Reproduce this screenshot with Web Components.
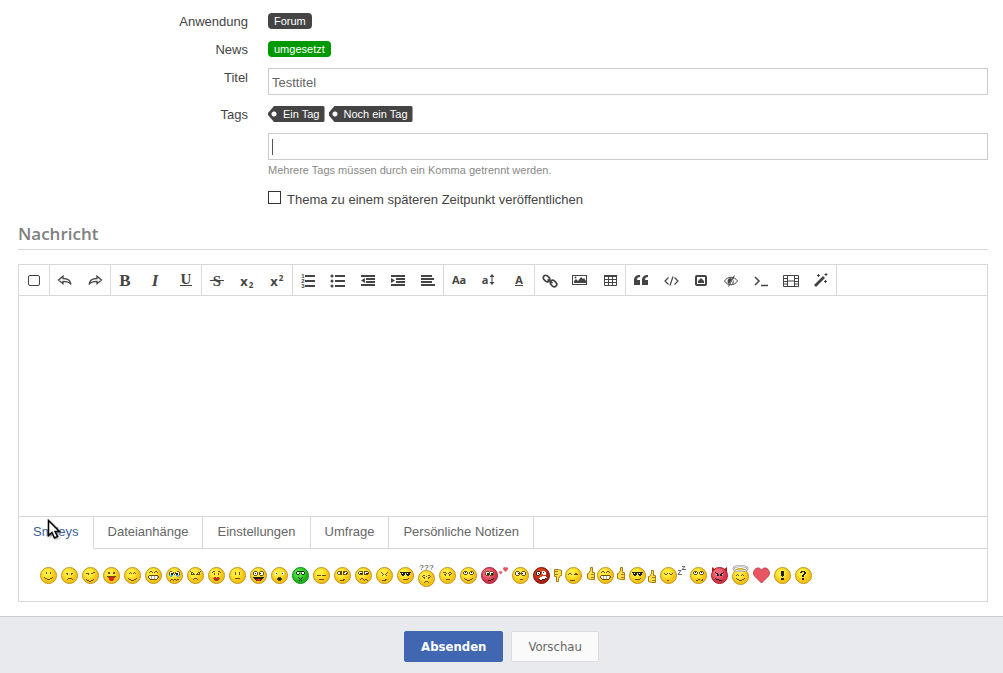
<!DOCTYPE html>
<html lang="de">
<head>
<meta charset="utf-8">
<title>Neues Thema</title>
<style>
	html {
		height: 100%;
	}

	body {
		margin: 0;
		min-height: 100%;
		display: flex;
		flex-direction: column;
		background: #fff;
		color: #444;
		font: 13px/18px "Liberation Sans", Arial, sans-serif;
	}
</style>
</head>
<body>
<thread-form></thread-form>

<script>
	function define(name, html, setup) {
		const template = document.createElement('template');
		template.innerHTML = html;

		window.customElements.define(
			name,
			class extends HTMLElement {
				constructor() {
					super();
					this.attachShadow({ mode: 'open' });
					this.shadowRoot.appendChild(template.content.cloneNode(true));
				}

				connectedCallback() {
					if (setup) setup(this, this.shadowRoot);
				}
			}
		);
	}

	// label on the left, fields on the right
	define('form-row', `
		<style>
			:host {
				display: flex;
				gap: 20px;
			}

			.label {
				flex: 0 0 230px;
				box-sizing: border-box;
				height: 18px;
				padding-top: 1px;
				text-align: right;
			}

			.field {
				flex: 1;
				min-width: 0;
				display: flex;
				flex-direction: column;
				gap: 10px;
			}
		</style>
		<div class="label"><slot name="label"></slot></div>
		<div class="field"><slot></slot></div>
	`);

	define('label-badge', `
		<style>
			:host {
				display: block;
				box-sizing: border-box;
				height: 16px;
				padding: 0 6px;
				border-radius: 4px;
				background: #444;
				color: #fff;
				font-size: 11px;
				line-height: 16px;
				white-space: nowrap;
			}

			:host([color="green"]) {
				background: #090;
			}

			:host([tag]) {
				padding: 0 5px 0 15px;
				border-radius: 2px;
				background: radial-gradient(circle at 6px 8px, #fff 2px, #444 3px);
				clip-path: polygon(0 7px, 6px 0, 100% 0, 100% 100%, 6px 100%, 0 9px);
			}
		</style>
		<slot></slot>
	`);

	const line = (x, y, w) => `<rect x="${x}" y="${y}" width="${w}" height="2"/>`;

	const icons = {
		source: '<rect x="2.5" y="3.5" width="11" height="10" rx="1.5" class="o"/>',
		undo: '<path class="o" stroke-width="1.300" d="M1.500 8 6 4.200v2.300c4.500 0 7.500 1.500 8 6-1.500-2.500-4-3.200-8-3.200v2.400z"/>',
		redo: '<path class="o" stroke-width="1.300" d="M14.500 8 10 4.200v2.300c-4.500 0-7.500 1.500-8 6 1.500-2.500 4-3.200 8-3.200v2.400z"/>',
		bold: '<text x="7" y="14" class="serif">B</text>',
		italic: '<text x="7" y="14" class="serif" font-style="italic">I</text>',
		underline: '<text x="8" y="12" class="serif small">U</text><path d="M2 13h12v1H2z"/>',
		strike: '<text x="8" y="14" class="serif small">S</text><path d="M1 8h14v1H1z"/>',
		sub: '<text x="5" y="14" class="sans big">x</text><text x="12" y="16" class="sans tiny">2</text>',
		sup: '<text x="5" y="14" class="sans big">x</text><text x="12" y="9" class="sans tiny">2</text>',
		ol: '<text x="3" y="6" class="num">1</text><text x="3" y="11" class="num">2</text><text x="3" y="16" class="num">3</text>' +
			line(5, 3, 10) + line(5, 8, 10) + line(5, 13, 10),
		ul: '<circle cx="2" cy="4" r="1.500"/><circle cx="2" cy="9" r="1.500"/><circle cx="2" cy="14" r="1.500"/>' +
			line(5, 3, 10) + line(5, 8, 10) + line(5, 13, 10),
		outdent: line(1, 3, 14) + line(6, 6, 9) + line(6, 9, 9) + line(1, 12, 14) + '<path d="M5 6v5L1 8.500z"/>',
		indent: line(1, 3, 14) + line(6, 6, 9) + line(6, 9, 9) + line(1, 12, 14) + '<path d="M1 6v5l4-2.500z"/>',
		align: line(1, 3, 11) + line(1, 6, 13) + line(1, 9, 11) + line(1, 12, 14),
		font: '<text x="8" y="12" class="sans">Aa</text>',
		size: '<text x="4" y="12" class="sans">a</text><path d="M11 2l2.500 3h-2v5h2L11 13l-2.500-3h2V5h-2z"/>',
		color: '<text x="8" y="12" class="sans">A</text><path d="M4 13h8v1H4z"/>',
		link: '<g fill="none" stroke="#444" stroke-width="1.700"><rect x="1" y="4" width="7" height="5" rx="2.500" transform="rotate(42 4.500 6.500)"/><rect x="8" y="9" width="7" height="5" rx="2.500" transform="rotate(42 11.500 11.500)"/><path d="m5.500 7.500 5 3.500"/></g>',
		image: '<rect x=".5" y="3.500" width="14" height="9" class="o"/><path d="M2 11V9l2-2 2 2 3-4 2 2 1-1 2 3v2z"/><circle cx="3.500" cy="5.500" r="1"/>',
		table: '<path class="o" d="M2.500 4v9.500h12V4zM6.500 4v9.500M10.500 4v9.500M2.500 7.500h12M2.500 10.500h12"/><path d="M2 3h13v2H2z"/>',
		quote: '<path d="M7 3v2C5 5 4 6 4 8h3v5H1V8c0-3 2-5 6-5zM15 3v2c-2 0-3 1-3 3h3v5H9V8c0-3 2-5 6-5z"/>',
		code: '<path class="o" stroke-width="1.200" d="M5.500 5.500 2 9l3.500 3.500M11.500 5.500 15 9l-3.500 3.500M10 4.500l-3 9"/>',
		spoiler: '<rect x="3" y="4" width="10" height="9" rx="1" fill="none" stroke="#444" stroke-width="2"/><path d="M5 11V9l3-3 3 3v2z"/>',
		eye: '<path class="o" d="M1.500 9c3-5 10-5 13 0-3 5-10 5-13 0z"/><path d="M7 6c-3 1-3 5-1 6l5-8-2 9c2-1 2-4 1-6z"/><path class="o" d="m11.500 3.500-6 11"/>',
		terminal: '<path class="o" stroke-width="1.500" d="m2 5 4 4-4 4M8 13.500h7"/>',
		film: '<path class="o" d="M.5 3.500h15v11H.5zM4.500 3.500v11M11.500 3.500v11M4.500 9h7M.5 6.500h4M.5 9.500h4M.5 12h4M11.500 6.500h4M11.500 9.500h4M11.500 12h4"/>',
		magic: '<path d="m1 13 9-9 2 2-9 9z"/><path class="o" d="M5.500 2v3M4 3.500h3M13 1v3M11.500 2.500h3M12.500 8v3M11 9.500h3"/>'
	};

	define('tool-button', `
		<style>
			:host {
				display: block;
			}

			button {
				display: flex;
				align-items: center;
				justify-content: center;
				width: 30px;
				height: 30px;
				margin: 0;
				padding: 0;
				border: 0;
				background: none;
			}

			svg {
				width: 16px;
				height: 16px;
				fill: #444;
				overflow: visible;
			}

			.o {
				fill: none;
				stroke: #444;
			}

			text {
				text-anchor: middle;
				font-weight: bold;
			}

			.serif {
				font-family: "Liberation Serif", serif;
				font-size: 17px;
			}

			.serif.small {
				font-size: 15px;
			}

			.sans {
				font-family: "Open Sans", sans-serif;
				font-size: 11px;
			}

			.sans.big {
				font-size: 13px;
			}

			.sans.tiny {
				font-size: 8px;
			}

			.num {
				font-family: "Liberation Sans", sans-serif;
				font-size: 6px;
			}
		</style>
		<button type="button"><svg viewBox="0 0 16 16" aria-hidden="true"></svg></button>
	`, (host, root) => {
		root.querySelector('svg').innerHTML = icons[host.getAttribute('icon')];
		root.querySelector('button').setAttribute('aria-label', host.getAttribute('icon'));
	});

	define('editor-toolbar', `
		<style>
			:host {
				display: flex;
				flex-wrap: wrap;
				border-bottom: 1px solid #d8d8d8;
			}

			.group {
				display: flex;
				border-right: 1px solid #d8d8d8;
			}
		</style>
	`, (host, root) => {
		const groups = [
			['source'],
			['undo', 'redo'],
			['bold', 'italic', 'underline'],
			['strike', 'sub', 'sup'],
			['ol', 'ul', 'outdent', 'indent', 'align'],
			['font', 'size', 'color'],
			['link', 'image', 'table'],
			['quote', 'code', 'spoiler', 'eye', 'terminal', 'film', 'magic']
		];
		groups.forEach((names) => {
			const group = document.createElement('div');
			group.className = 'group';
			group.innerHTML = names.map((n) => `<tool-button icon="${n}"></tool-button>`).join('');
			root.appendChild(group);
		});
	});

	// smileys: a 17px ball with a pixel face, 11 columns wide, starting at 3/4
	const colors = { '#': '#6b4e10', k: '#222', w: '#fff', r: '#e02418', b: '#4bbde8', g: '#b9b186' };

	function pixels(art) {
		let out = '';
		art.split('/').forEach((row, y) => {
			[...row].forEach((c, x) => {
				if (colors[c]) out += `<rect x="${x + 3}" y="${y + 4}" width="1" height="1" fill="${colors[c]}"/>`;
			});
		});
		return out;
	}

	const ball = (fill = 'y', edge = '#c09320') =>
		`<circle cx="8.500" cy="8.500" r="8" fill="url(#${fill})" stroke="${edge}"/>`;
	const face = (art, fill, edge) => ball(fill, edge) + pixels(art);

	const grin = '..##...##../.#..#.#..#.///.#########./#wwgwwgwwg#/#wwgwwgwwg#/.#wgwwgww#./..#######..';
	const shades = '/kkkkkkkkkkk/.kwkk.kwkk./.kkkk.kkkk./..kk...kk..///........#../...#####...';
	const thumb = (x, y) =>
		`<g transform="translate(${x} ${y})" stroke="#a87a10"><path d="M1.500 6.500h1l2-3v-3h2v5h2v7h-4l-3-1z" fill="#ffe040"/><path d="M5 7.500h3M5 10.500h3"/></g>`;
	const heart = (x, y, s) =>
		`<path transform="translate(${x} ${y}) scale(${s})" d="M8.500 16 1.500 9C-1 5 2 1 5 1c2 0 3 1 3.500 2.500C9 2 10 1 12 1c3 0 6 4 3.500 8z" fill="#e85563" stroke="#c9404e"/>`;

	const smileys = [
		['Smile', face('/...#...#.../...#...#...////.#.......#./..##...##../....###....')],
		['Sad', face('//..##...##../...#...#...////....####.../...#....#..')],
		['Wink', face('/........##./.###..##.../...#......./////.#......#../..##..##.../....##.....')],
		['Tongue', face('/..##...##../..##...##..///.#########./..rrrrrrr../...rrrrr.../...rrrrr.../....rrr....')],
		['Happy', face('/...#...#.../..#.#.#.#.././///.#.......#./..##...##../....###....')],
		['Grin', face(grin)],
		['Cry', face('.##.....##./#www#.#www#/#wkk#.#kkw#/#wkkw#wkkw#/bbbb...bbbb/.bb.....bb.///..##.##.##./.#..#..#...')],
		['Angry', face('#.........#/.##.....##./.#w#...#w#./.####.####.////....###..../...#...#...')],
		['Kiss', face('..##...##../.#.......#./...#...#.../...#...#...///...rr.rr.../..rrrrrrr../...#####.../....rrr....')],
		['Neutral', face('/...#...#.../...#...#.../...#...#...////...#####...')],
		['Crazy', face('.###...###./#www#.#www#/#wkw#.#kww#/#www#.#www#/.###...###.//kkkkkkkkkkk/.kkkkkkkkk./..krrrrrk../...krrrk...')],
		['Shocked', face('/.ww.....ww./.wk.....kw./.ww.....ww.///....###..../...#kkk#.../...#kkk#.../....###....')],
		['Sick', face('..kkkkkkk../.kww...wwk./.kwwk.kwwk./..kk...kk..///...k...k.../....k.k..../.....k...../....k.k....', 'g', '#168a16')],
		['Bored', face('////.####.####.////...#####...')],
		['Rolleyes', face('.####.####./#ww##.##ww#/#wwk#.#wwk#/.####.####./////......##../...####....')],
		['Confused', face('.####.####./#www#.#www#/#wkk#.#wkk#/.####.####.////...##...../..#..#.##../......#..#.')],
		['Pinch', face('/..#.....#../...#...#.../....#.#..../...#...#...////......##../...####....')],
		['Cool', face(shades)],
		['Huh', '<text x="8.500" y="7">???</text><g transform="translate(0 7)">' + face('/..##...##../.#...#...#./..##...##../...#...#...///....###..../...#...#...') + '</g>', 17, 24],
		['Whistling', face('/.###...##../....#.#..#./..##...##../...#...#...////....####...')],
		['Roll', face('.###...###./#wkw#.#wkw#/#www#.#www#/.###...###.////.#.......#./..##...##../....###....')],
		['Love', face('..###.###../.#www#www#./.#wkk#wkk#./.#wkk#wkk#./..###.###..///.........k./.......kk../....kkk....', 'p', '#a61e34') + heart(22, 0, .3) + heart(18, 4, .2), 27],
		['Blink', face('.###...###./#www#.#www#/#wwk###kww#/#www#.#www#/.###...###.////.....###...')],
		['Furious', face('.kkk..www../kwwwk.wkww./kwkwk.wwww./kwwk...www./.kk......../......wwww./....wwwwwww/...wwwwwwk./...kwwkkk../....kk.....', 'r', '#7c1207')],
		['Thumbdown', `<g transform="rotate(180 4.500 8)">${thumb(0, 1)}</g><g transform="translate(11)">${face('//.##....##../#..#..####.//////..#####....')}</g>`, 28],
		['Thumbsup', thumb(0, 0) + '<g transform="translate(11)">' + face(grin) + '</g>' + thumb(30, 0), 39],
		['Coolthumb', face(shades) + thumb(18, 3), 27],
		['Sleeping', face('//.#..#.#..#./..##...##..//////....##.....') + '<path d="M18 3.500h3l-3 4h4M22-.500h3l-3 3h4" fill="none" stroke="#667"/>', 26],
		['Think', face('.###...###./#wkw#.#wkw#/#www#.#www#/.###...###./////.....##..#./...##...##.')],
		['Evil', '<path d="M1 0l4 3-4 3zM16 0l-4 3 4 3z" fill="#a81820"/>' + face('/.k.......k./..kk...kk../..wkk.kkw../...kk.kk...///.k......../..kkk....../.....kkk...', 'p', '#b01a28')],
		['Angel', '<g transform="translate(0 3)">' + face('//..#....#../.#.#..#.#..///.#.......#./..##...##../....###....') + '</g><ellipse cx="8.500" cy="3.500" rx="7" ry="2.500" fill="none" stroke="#999" stroke-width="2"/><ellipse cx="8.500" cy="3.500" rx="7" ry="2.500" fill="none" stroke="#eee"/>', 17, 20],
		['Love it', heart(0, 0, 1)],
		['Exclamation', face('....kkk..../....kkk..../....kkk..../....kkk..../....kkk..../.....k.....//....kkk..../....kkk....')],
		['Question', face('...kkkk..../..kk..kk.../......kk.../.....kk..../....kk...../....kk.....//....kk...../....kk.....')]
	];

	define('smiley-icon', `
		<style>
			:host {
				display: block;
			}

			svg {
				display: block;
				overflow: visible;
			}

			text {
				text-anchor: middle;
				font: 8px "Liberation Mono", monospace;
				fill: #444;
			}
		</style>
	`, (host, root) => {
		const [name, art, w = 17, h = 17] = smileys[host.getAttribute('index')];
		const shade = (id, a, b) =>
			`<radialGradient id="${id}" cx="40%" cy="35%"><stop offset="0.400" stop-color="${a}"/><stop offset="1" stop-color="${b}"/></radialGradient>`;
		root.innerHTML += `<svg role="img" aria-label="${name}" width="${w}" height="${h}" viewBox="0 0 ${w} ${h}">
			<defs>${shade('y', '#ffec3c', '#f4c410')}${shade('g', '#4be23c', '#1eb51a')}${shade('p', '#f3697c', '#d2344a')}${shade('r', '#dc4520', '#b3200c')}</defs>
			${art}
		</svg>`;
	});

	define('smiley-list', `
		<style>
			:host {
				display: flex;
				flex-wrap: wrap;
				align-items: center;
				gap: 4px;
				padding: 14px 21px;
			}
		</style>
	`, (host, root) => {
		smileys.forEach((s, i) => {
			const icon = document.createElement('smiley-icon');
			icon.setAttribute('index', i);
			root.appendChild(icon);
		});
	});

	define('tab-bar', `
		<style>
			:host {
				position: relative;
				display: flex;
				border-top: 1px solid #d8d8d8;
			}

			button {
				margin: 0;
				padding: 6px 14px 7px;
				border: solid #d8d8d8;
				border-width: 0 1px 1px 0;
				background: none;
				color: #666;
				font: inherit;
			}

			button[aria-selected="true"] {
				border-bottom-color: transparent;
				color: #3c5f9f;
			}

			.rest {
				flex: 1;
				border-bottom: 1px solid #d8d8d8;
			}

			.pointer {
				position: absolute;
				left: 28px;
				top: 2px;
				filter: drop-shadow(1px 1px 1px #999);
			}
		</style>
		<button type="button" role="tab" aria-selected="true">Smileys</button>
		<button type="button" role="tab">Dateianhänge</button>
		<button type="button" role="tab">Einstellungen</button>
		<button type="button" role="tab">Umfrage</button>
		<button type="button" role="tab">Persönliche Notizen</button>
		<div class="rest"></div>
		<svg class="pointer" width="14" height="21" viewBox="0 0 14 21" aria-hidden="true">
			<path d="M1.500 1.500v15l3.500-3 2.500 5.500 3-1.500-2.500-5h4.500z" fill="#fff" stroke="#000" stroke-width="1.500"/>
		</svg>
	`);

	define('message-editor', `
		<style>
			:host {
				display: block;
				border: 1px solid #d8d8d8;
			}

			textarea {
				display: block;
				box-sizing: border-box;
				width: 100%;
				height: 220px;
				padding: 10px;
				border: 0;
				outline: 0;
				resize: none;
				font: inherit;
			}
		</style>
		<editor-toolbar></editor-toolbar>
		<textarea aria-label="Nachricht"></textarea>
		<tab-bar role="tablist"></tab-bar>
		<smiley-list></smiley-list>
	`);

	define('form-actions', `
		<style>
			:host {
				flex: 1;
				display: flex;
				justify-content: center;
				align-items: flex-start;
				gap: 8px;
				padding: 14px 0 11px;
				border-top: 1px solid #ccc;
				background: #e9eaee;
			}

			button {
				height: 31px;
				padding: 0 16px;
				border: 1px solid #dcdcdc;
				border-radius: 2px;
				background: #fafafa;
				color: #666;
				font: 13px "DejaVu Sans Condensed", Tahoma, sans-serif;
			}

			.primary {
				border-color: #4267b2;
				background: #4267b2;
				color: #fff;
				font-weight: bold;
			}
		</style>
		<button class="primary" type="submit">Absenden</button>
		<button type="button">Vorschau</button>
	`);

	define('thread-form', `
		<style>
			:host,
			form {
				flex: 1;
				display: flex;
				flex-direction: column;
			}

			main {
				padding: 12px 15px 14px 18px;
			}

			.rows {
				display: flex;
				flex-direction: column;
				gap: 10px;
			}

			.badges {
				display: flex;
				align-items: center;
				gap: 4px;
				height: 18px;
			}

			.text {
				position: relative;
			}

			input[type="text"] {
				display: block;
				box-sizing: border-box;
				width: 100%;
				height: 27px;
				padding: 2px 3px 0;
				border: 1px solid #ccc;
				outline: 0;
				color: #666;
				font: inherit;
			}

			.caret {
				position: absolute;
				left: 4px;
				top: 6px;
				width: 1px;
				height: 16px;
				background: #555;
			}

			small {
				display: block;
				margin-top: 2px;
				color: #888;
				font-size: 11px;
				line-height: 16px;
			}

			.check {
				display: flex;
				gap: 6px;
				margin-top: 2px;
				line-height: 20px;
			}

			.check input {
				appearance: none;
				width: 13px;
				height: 13px;
				margin: 1px 0 0;
				border: 1px solid #333;
				background: #fff;
			}

			h2 {
				margin: 13px 0 14px;
				padding-bottom: 4px;
				border-bottom: 1px solid #d8d8d8;
				color: #808080;
				font: 600 17px/22px "Open Sans", "Trebuchet MS", sans-serif;
			}
		</style>
		<form>
			<main>
				<div class="rows">
					<form-row>
						<span slot="label">Anwendung</span>
						<div class="badges"><label-badge>Forum</label-badge></div>
					</form-row>
					<form-row>
						<span slot="label">News</span>
						<div class="badges"><label-badge color="green">umgesetzt</label-badge></div>
					</form-row>
					<form-row>
						<label slot="label" for="subject">Titel</label>
						<input type="text" id="subject" value="Testtitel">
					</form-row>
					<form-row>
						<label slot="label" for="tags">Tags</label>
						<div class="badges">
							<label-badge tag>Ein Tag</label-badge>
							<label-badge tag>Noch ein Tag</label-badge>
						</div>
						<div class="text">
							<input type="text" id="tags">
							<span class="caret"></span>
							<small>Mehrere Tags müssen durch ein Komma getrennt werden.</small>
						</div>
					</form-row>
					<form-row>
						<label class="check"><input type="checkbox">Thema zu einem späteren Zeitpunkt veröffentlichen</label>
					</form-row>
				</div>
				<h2>Nachricht</h2>
				<message-editor></message-editor>
			</main>
			<form-actions></form-actions>
		</form>
	`);
</script>
</body>
</html>
